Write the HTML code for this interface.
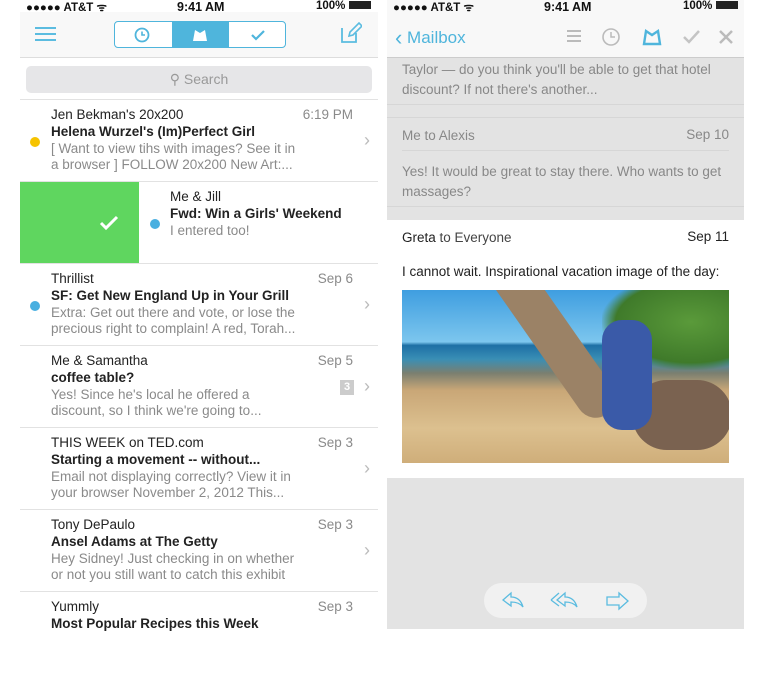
<!DOCTYPE html>
<html><head><meta charset="utf-8"><style>
*{margin:0;padding:0;box-sizing:border-box}
body{width:760px;height:629px;background:#fff;font-family:"Liberation Sans",Arial,sans-serif;position:relative;overflow:hidden}
.a{position:absolute}
.L{left:20px;top:0;width:358px;height:629px;background:#fff}
.sb{font-size:11.5px;font-weight:bold;color:#111}
.row{position:absolute;left:0;width:358px;height:82px;border-top:1px solid #e2e2e2}
.fr{position:absolute;left:31px;top:7px;font-size:13.5px;color:#222}
.sj{position:absolute;left:31px;top:24px;font-size:13.5px;font-weight:bold;color:#222;white-space:nowrap}
.pv{position:absolute;left:31px;top:41px;font-size:13.5px;color:#8a8a8a;line-height:16px;white-space:nowrap}
.dt{position:absolute;right:25px;top:7px;font-size:13.5px;color:#8a8a8a}
.ch{position:absolute;right:8px;top:30px;font-size:18px;color:#bbb}
.dot{position:absolute;left:10px;top:37px;width:10px;height:10px;border-radius:50%}
.R{left:387px;top:0;width:357px;height:629px;background:#e3e3e3}
.rt{font-size:13.5px;color:#888}
</style></head><body>
<div class="a L">
 <div class="a sb" style="left:6px;top:0">●●●●● AT&amp;T ᯤ</div>
 <div class="a sb" style="left:157px;top:0;font-size:12.5px">9:41 AM</div>
 <div class="a sb" style="left:296px;top:0">100% <span style="display:inline-block;width:22px;height:8px;background:#222;vertical-align:0"></span></div>
 <div class="a" style="left:0;top:12px;width:358px;height:46px;background:#f8f8f8;border-bottom:1px solid #ddd"></div>
 <div class="a" style="left:15px;top:27px;width:21px;height:2px;background:#5bbce0;box-shadow:0 6px 0 #5bbce0,0 12px 0 #5bbce0"></div>
 <div class="a" style="left:94px;top:21px;width:172px;height:27px;border:1.5px solid #4fb5dc;border-radius:4px;overflow:hidden;background:#fff">
  <div class="a" style="left:57px;top:0;width:57px;height:27px;background:#4fb5dc"></div>
  <svg class="a" style="left:18px;top:5px" width="18" height="16"><circle cx="9" cy="8" r="6.5" fill="none" stroke="#4fb5dc" stroke-width="1.8"/><path d="M9 4.5V8h3" fill="none" stroke="#4fb5dc" stroke-width="1.6"/></svg>
  <svg class="a" style="left:76px;top:6px" width="18" height="14"><path d="M2 13L4 2L9 5L14 2L16 13Z" fill="#fff"/></svg>
  <svg class="a" style="left:134px;top:6px" width="18" height="14"><path d="M3 7L7 11L15 3" fill="none" stroke="#4fb5dc" stroke-width="2.2"/></svg>
 </div>
 <svg class="a" style="left:320px;top:22px" width="22" height="22"><path d="M2 6v14h14v-9" fill="none" stroke="#5bbce0" stroke-width="1.8"/><path d="M9 14l1-4L19 1l3 3-9 9z" fill="none" stroke="#5bbce0" stroke-width="1.6"/></svg>
 <div class="a" style="left:6px;top:66px;width:346px;height:27px;background:#e6e6e8;border-radius:5px;text-align:center;font-size:14px;line-height:27px;color:#999">⚲ Search</div>
 <div class="row" style="top:99px"><div class="dot" style="background:#f6c300"></div><div class="fr">Jen Bekman's 20x200</div><div class="dt">6:19 PM</div><div class="sj">Helena Wurzel's (Im)Perfect Girl</div><div class="pv">[ Want to view tihs with images? See it in<br>a browser ] FOLLOW 20x200 New Art:...</div><div class="ch">›</div></div>
 <div class="row" style="top:181px"><div class="a" style="left:0;top:0;width:119px;height:82px;background:#5fd65f"></div><svg class="a" style="left:78px;top:32px" width="22" height="18"><path d="M3 9l5 5L19 3" fill="none" stroke="#fff" stroke-width="3"/></svg><div class="dot" style="left:130px;background:#49afe0"></div><div class="fr" style="left:150px">Me &amp; Jill</div><div class="sj" style="left:150px">Fwd: Win a Girls' Weekend</div><div class="pv" style="left:150px">I entered too!</div></div>
 <div class="row" style="top:263px"><div class="dot" style="background:#49afe0"></div><div class="fr">Thrillist</div><div class="dt">Sep 6</div><div class="sj">SF: Get New England Up in Your Grill</div><div class="pv">Extra: Get out there and vote, or lose the<br>precious right to complain! A red, Torah...</div><div class="ch">›</div></div>
 <div class="row" style="top:345px"><div class="fr">Me &amp; Samantha</div><div class="dt">Sep 5</div><div class="sj">coffee table?</div><div class="pv">Yes! Since he's local he offered a<br>discount, so I think we're going to...</div><div class="a" style="left:320px;top:34px;width:14px;height:15px;background:#ccc;color:#fff;font-size:11px;text-align:center;font-weight:bold;line-height:15px">3</div><div class="ch">›</div></div>
 <div class="row" style="top:427px"><div class="fr">THIS WEEK on TED.com</div><div class="dt">Sep 3</div><div class="sj">Starting a movement -- without...</div><div class="pv">Email not displaying correctly? View it in<br>your browser November 2, 2012 This...</div><div class="ch">›</div></div>
 <div class="row" style="top:509px"><div class="fr">Tony DePaulo</div><div class="dt">Sep 3</div><div class="sj">Ansel Adams at The Getty</div><div class="pv">Hey Sidney! Just checking in on whether<br>or not you still want to catch this exhibit</div><div class="ch">›</div></div>
 <div class="row" style="top:591px"><div class="fr">Yummly</div><div class="dt">Sep 3</div><div class="sj">Most Popular Recipes this Week</div></div>
</div>
<div class="a R">
 <div class="a" style="left:0;top:0;width:357px;height:58px;background:#f8f8f8;border-bottom:1px solid #ccc"></div>
 <div class="a sb" style="left:6px;top:0">●●●●● AT&amp;T ᯤ</div>
 <div class="a sb" style="left:157px;top:0;font-size:12.5px">9:41 AM</div>
 <div class="a sb" style="left:296px;top:0">100% <span style="display:inline-block;width:22px;height:8px;background:#222"></span></div>
 <div class="a" style="left:8px;top:25px;font-size:17px;color:#4fb5dc"><span style="font-size:22px;vertical-align:-2px">‹</span> Mailbox</div>
 <div class="a" style="left:180px;top:30px;width:14px;height:2px;background:#bbb;box-shadow:0 5px 0 #bbb,0 10px 0 #bbb"></div>
 <svg class="a" style="left:214px;top:27px" width="20" height="20"><circle cx="10" cy="10" r="8" fill="none" stroke="#bbb" stroke-width="1.6"/><path d="M10 5v5h4" fill="none" stroke="#bbb" stroke-width="1.5"/></svg>
 <svg class="a" style="left:254px;top:28px" width="22" height="18"><path d="M3 16L5 3L11 7L17 3L19 16Z" fill="none" stroke="#4fb5dc" stroke-width="2.4"/></svg>
 <svg class="a" style="left:294px;top:28px" width="20" height="18"><path d="M3 9l5 5L18 3" fill="none" stroke="#c4c4c4" stroke-width="2.5"/></svg>
 <svg class="a" style="left:330px;top:28px" width="18" height="18"><path d="M3 3l12 12M15 3L3 15" stroke="#bbb" stroke-width="2.5"/></svg>
 <div class="a rt" style="left:15px;top:60px;line-height:20px;width:330px">Taylor — do you think you'll be able to get that hotel discount? If not there's another...</div>
 <div class="a" style="left:0;top:104px;width:357px;height:1px;background:#d6d6d6"></div>
 <div class="a" style="left:0;top:117px;width:357px;height:1px;background:#d6d6d6"></div>
 <div class="a rt" style="left:15px;top:128px">Me to Alexis</div>
 <div class="a rt" style="right:15px;top:127px">Sep 10</div>
 <div class="a" style="left:15px;top:150px;width:327px;height:1px;background:#d6d6d6"></div>
 <div class="a rt" style="left:15px;top:162px;line-height:20px;width:335px">Yes! It would be great to stay there. Who wants to get massages?</div>
 <div class="a" style="left:0;top:206px;width:357px;height:1px;background:#d6d6d6"></div>
 <div class="a" style="left:0;top:220px;width:357px;height:258px;background:#fff"></div>
 <div class="a" style="left:15px;top:230px;font-size:13.5px;color:#222">Greta <span style="color:#444">to Everyone</span></div>
 <div class="a" style="right:15px;top:229px;font-size:13.5px;color:#222">Sep 11</div>
 <div class="a" style="left:15px;top:264px;font-size:13.5px;color:#222">I cannot wait. Inspirational vacation image of the day:</div>
 <div class="a" style="left:15px;top:290px;width:327px;height:173px;overflow:hidden;background:linear-gradient(180deg,#3f9ee0 0%,#7cc6ee 30%,#1d6fa5 32%,#3a8fb5 40%,#7a7f70 48%,#c9a777 58%,#dcc08f 80%,#cfae7a 100%)">
  <div class="a" style="left:200px;top:0;width:127px;height:80px;background:radial-gradient(ellipse at 70% 40%,#5a9a3a,#3f7a2a 60%,transparent 72%)"></div>
  <div class="a" style="left:80px;top:-20px;width:40px;height:190px;background:#9b8266;transform:rotate(-35deg);transform-origin:top left;border-radius:20px"></div>
  <div class="a" style="left:230px;top:90px;width:100px;height:70px;background:#7a6250;border-radius:40px"></div>
  <div class="a" style="left:200px;top:30px;width:50px;height:110px;background:#3a5aa8;border-radius:20px"></div>
 </div>
 <div class="a" style="left:97px;top:583px;width:163px;height:35px;background:#f1f1f1;border-radius:18px"></div>
 <svg class="a" style="left:112px;top:590px" width="140" height="22"><path d="M4 10L12 3v4c6 0 10 3 12 10c-3-4-7-5-12-5v4z" fill="none" stroke="#5bbce0" stroke-width="1.3"/><path d="M58 10L66 3v4c6 0 10 3 12 10c-3-4-7-5-12-5v4zM52 10L60 3M52 10L60 16" fill="none" stroke="#5bbce0" stroke-width="1.3"/><path d="M108 7h12v-4l9 8-9 8v-4h-12z" fill="none" stroke="#5bbce0" stroke-width="1.3"/></svg>
</div>
</body></html>
